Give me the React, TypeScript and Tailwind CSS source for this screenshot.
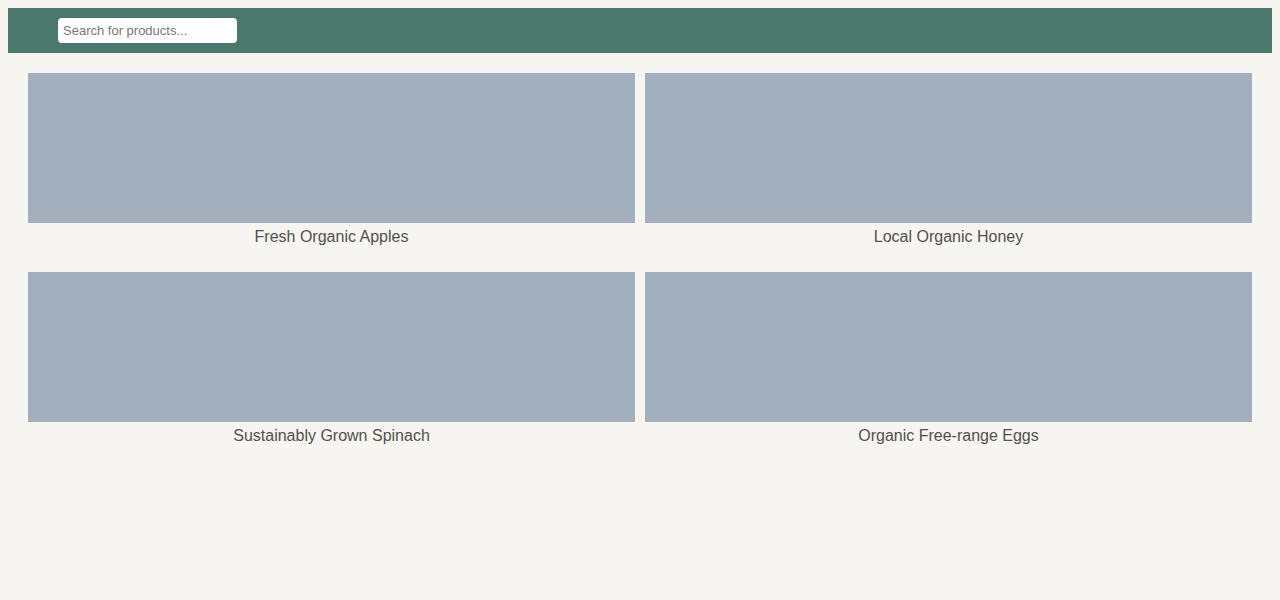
const products = [
  'Fresh Organic Apples',
  'Local Organic Honey',
  'Sustainably Grown Spinach',
  'Organic Free-range Eggs',
];

const App = () => {
  return (
    <div className="min-h-screen bg-[#f6f5f1] p-2 font-['Liberation_Sans',Arial,sans-serif]">
      {/* Header */}
      <header className="h-[45px] bg-[#4b786d] flex items-center pl-[50px]">
        <input
          type="text"
          placeholder="Search for products..."
          className="w-[179px] h-[25px] rounded-[4px] bg-white px-[5px] text-[13px] text-[#333] placeholder:text-[#777] outline-none"
        />
      </header>

      {/* Product grid */}
      <main className="grid grid-cols-2 gap-x-[10px] gap-y-[23px] p-5">
        {products.map((name) => (
          <div key={name} className="flex flex-col">
            <div className="h-[150px] bg-[#a4afbd]"></div>
            <p className="mt-[2px] text-center text-base leading-6 text-[#554f4c]">{name}</p>
          </div>
        ))}
      </main>
    </div>
  );
};

export default App;
